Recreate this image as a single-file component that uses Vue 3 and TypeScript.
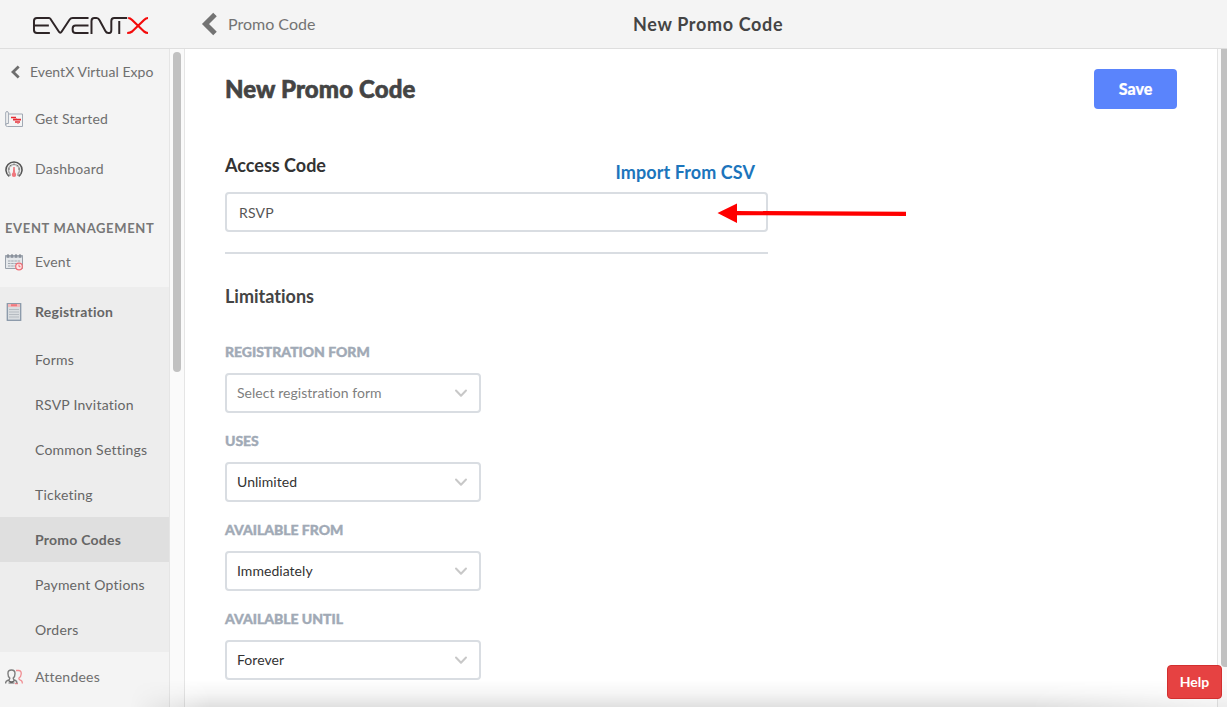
<script setup lang="ts">
interface NavItem {
  label: string
  icon: 'plan' | 'gauge'
  cls: string
}
interface Field {
  label: string
  value: string
  placeholder?: boolean
}

const topItems: NavItem[] = [
  { label: 'Get Started', icon: 'plan', cls: 'started' },
  { label: 'Dashboard', icon: 'gauge', cls: 'dashboard' },
]
const subItems: string[] = [
  'Forms',
  'RSVP Invitation',
  'Common Settings',
  'Ticketing',
  'Promo Codes',
  'Payment Options',
  'Orders',
]
const fields: Field[] = [
  { label: 'REGISTRATION FORM', value: 'Select registration form', placeholder: true },
  { label: 'USES', value: 'Unlimited' },
  { label: 'AVAILABLE FROM', value: 'Immediately' },
  { label: 'AVAILABLE UNTIL', value: 'Forever' },
]
</script>

<template>
  <div class="app">
    <header class="topbar">
      <div class="brand">
        <svg class="logo" width="117" height="20" viewBox="0 0 118 20" preserveAspectRatio="none" fill="none" stroke="#2e2527" stroke-width="2">
          <path d="M18 2H5Q2 2 2 5V14Q2 17 5 17H18M2 9.500H17" />
          <path d="M18 2L27 15.500Q28.500 18 30 15.500L38 3.500Q39 2 41 2H57" />
          <path d="M57 17H44Q41 17 41 14V12.500Q41 9.500 44 9.500H57" />
          <path d="M60 18V5Q60 2 63 2H65Q67 2 68 4L74 15Q75 17 77 17H78Q80 17 80 14V5Q80 2 83 2H96M88 5V18" />
          <path d="M97 2Q99 2 101 4L113 15.500Q115 17 117 17M117 2Q115 2 113 4L101 15.500Q99 17 96 17" stroke="#f40b0b" stroke-width="2.200" />
        </svg>
      </div>
      <a class="back">
        <svg width="17" height="24" viewBox="0 0 17 24"><path d="M14 2.500L4.500 12L14 21.500" fill="none" stroke="#737373" stroke-width="5" /></svg>
        <span>Promo Code</span>
      </a>
      <h1 class="page-name"><span>New Promo Code</span></h1>
    </header>

    <div class="body">
      <nav class="sidebar">
        <a class="expo">
          <svg width="10" height="14" viewBox="0 0 10 14"><path d="M8.700 1.400L3 7L8.700 12.600" fill="none" stroke="#6e6e6e" stroke-width="2.800" /></svg>
          <span>EventX Virtual Expo</span>
        </a>
        <a v-for="item in topItems" :key="item.label" class="nav-item" :class="item.cls">
          <svg v-if="item.icon === 'plan'" class="icon" viewBox="0 0 18 18" fill="none">
            <path d="M.7 15V3Q.7 1.500 2 1.500T3.400 3V13.500H2Q.7 13.500 .7 15Q.7 16.500 2.500 16.500H17.500V4H3.500" stroke="#a1a9b4" />
            <path d="M6 7.500H11M8 9.700H16M10 12H15" stroke="#e62c34" stroke-width="1.700" />
            <path d="M9 8.500H12M12 13.300H14" stroke="#ef8b8e" />
          </svg>
          <svg v-else class="icon" viewBox="0 0 18 18" fill="none">
            <path d="M4.300 16.400A8 8 0 1 1 13.700 16.400" stroke="#555" stroke-width="1.600" />
            <path d="M5.300 14A5.500 5.500 0 1 1 12.700 14" stroke="#aaa" stroke-width="1.500" />
            <path d="M3 9H5M13 9H15M5 5L6.200 6.200M13 5L11.800 6.200M9 3.500V5M2 15H6M12 15H16" stroke="#777" />
            <path d="M9 7L8.200 13.500H9.800Z" fill="#ef777d" stroke="#ef777d" />
            <circle cx="9" cy="14.800" r="2.200" fill="#ef777d" />
          </svg>
          <span>{{ item.label }}</span>
        </a>
        <h2 class="group"><span>EVENT MANAGEMENT</span></h2>
        <a class="nav-item">
          <svg class="icon" viewBox="0 0 18 18" fill="none">
            <path d="M.5 2.500H17.500V15.500H.5Z" fill="#e5e8eb" stroke="#98a0aa" />
            <path d="M.5 3.500H17.500" stroke="#a3abb5" stroke-width="2" />
            <path d="M3 1V5M7 1V5M11 1V5M15 1V5" stroke="#747b84" />
            <path d="M3 8H15.500M3 10.500H13M3 13H11" stroke="#a0a7af" stroke-dasharray="2.500 .7" />
            <circle cx="14" cy="13.500" r="3.300" fill="#fde7e7" stroke="#ee6d75" stroke-width="1.200" />
            <path d="M14 11.500V13.700H15.500" stroke="#ee6d75" />
          </svg>
          <span>Event</span>
        </a>
        <div class="section">
          <a class="nav-item registration">
            <svg class="icon" viewBox="0 0 18 18" fill="none">
              <rect x="2.300" y=".7" width="13.400" height="16.600" fill="#d9dde0" stroke="#8998a8" stroke-width="1.300" />
              <path d="M3 2.500H15" stroke="#f2b8ba" stroke-width="3" />
              <path d="M6 2.200H12" stroke="#ef777d" stroke-width="2" />
              <path d="M4 6.500H14M4 9H14M4 11.500H14M4 14H14" stroke="#b5bbc1" />
            </svg>
            <span>Registration</span>
          </a>
          <a v-for="sub in subItems" :key="sub" class="sub" :class="{ active: sub === 'Promo Codes' }">
            <span>{{ sub }}</span>
          </a>
        </div>
        <a class="nav-item attendees">
          <svg class="icon" viewBox="0 0 18 18" fill="none">
            <path d="M11 2.500H13.500Q16.500 2.500 16.200 6Q16 9 14 10Q13.500 11.500 16 12.300Q17.500 13 17.300 15.500M10 15.500H13" stroke="#f08c91" stroke-width="1.300" />
            <path d="M3 5Q3 2 6.500 2T10 5.500Q10 9 8.200 10.200Q8.200 12 10.500 12.500Q12 13 12 15.500M3 5Q2.800 9 4.800 10.200Q4.800 12 2.500 12.500Q.6 13 .6 15.500" stroke="#7c7c7c" stroke-width="1.400" />
            <path d="M3.500 12.500Q6.500 15.500 9.500 12.500M3.500 15H9.500" stroke="#656565" stroke-width="1.200" />
          </svg>
          <span>Attendees</span>
        </a>
      </nav>
      <div class="track"><div class="thumb"></div></div>

      <main class="content">
        <div class="title-row">
          <h2 class="title"><span>New Promo Code</span></h2>
          <button class="save"><span>Save</span></button>
        </div>
        <section class="access">
          <div class="access-head">
            <h3><span>Access Code</span></h3>
            <a class="import"><span>Import From CSV</span></a>
          </div>
          <div class="input"><span>RSVP</span></div>
          <hr />
        </section>
        <h3 class="limits"><span>Limitations</span></h3>
        <div v-for="f in fields" :key="f.label" class="field">
          <label><span>{{ f.label }}</span></label>
          <div class="select" :class="{ placeholder: f.placeholder }">
            <span>{{ f.value }}</span>
            <svg width="14" height="10" viewBox="0 0 14 10"><path d="M2 2.500L7 7.700L12 2.500" fill="none" stroke="#c8c8c8" stroke-width="2" stroke-linecap="round" stroke-linejoin="round" /></svg>
          </div>
        </div>
      </main>
      <div class="page-track"><div class="page-thumb"></div></div>
    </div>

    <div class="bottom-shade"></div>
    <svg class="arrow" width="190" height="22" viewBox="0 0 190 22">
      <path d="M.5 11L20 1.500V9L189 9.800V14L20 13.200V21Z" fill="#f00" />
    </svg>
    <button class="help"><span>Help</span></button>
  </div>
</template>

<style>
body { margin: 0; overflow: hidden; }
</style>

<style scoped>
.app { position: relative; width: 1227px; height: 707px; overflow: hidden; background: #fff; color: #6f6f6f; font-family: Lato, "Liberation Sans", sans-serif; font-size: 14px; font-variant-ligatures: none; display: flex; flex-direction: column; }
.app * { box-sizing: border-box; }
h1, h2, h3 { margin: 0; }
span { white-space: nowrap; }
.topbar { height: 49px; flex: none; background: #f4f4f4; border-bottom: 1px solid #dedede; display: flex; align-items: center; }
.brand { width: 201px; padding-left: 32px; padding-top: 4px; }
.logo { display: block; }
.back { display: flex; align-items: center; gap: 10px; width: 432px; font-size: 16px; color: #737373; }
.back span { margin-top: -2px; }
.page-name { font-size: 18px; font-weight: 700; letter-spacing: .66px; color: #444; }
.body { display: flex; flex: 1; min-height: 0; }
.sidebar { width: 169px; background: #f4f4f4; flex: none; overflow: hidden; letter-spacing: .23px; }
.expo { height: 46px; display: flex; align-items: center; padding-left: 10px; gap: 10px; letter-spacing: .05px; }
.nav-item { height: 50px; display: flex; align-items: center; padding-left: 5px; gap: 12px; }
.expo span, .nav-item span { margin-top: -2px; }
.started { height: 48px; }
.dashboard { height: 52px; }
.icon { width: 18px; height: 18px; flex: none; }
.group { height: 42px; padding-top: 23px; padding-left: 5px; font-size: 13px; line-height: 20px; letter-spacing: .64px; color: #777; }
.section { background: #ededed; color: #666; height: 365px; }
.registration { font-weight: 700; letter-spacing: .25px; }
.sub { height: 45px; display: flex; align-items: center; padding-left: 35px; }
.active { background: #dfdfdf; font-weight: 700; }
.track { width: 16px; flex: none; background: #fafafa; border: solid #e5e5e5; border-width: 0 1px; padding: 3px 0 0 3px; }
.thumb { width: 8px; height: 320px; border-radius: 4px; background: #c1c1c1; }
.content { width: 1032px; flex: none; padding: 20px 40px 0; color: #444; overflow: hidden; }
.title-row { display: flex; justify-content: space-between; height: 40px; align-items: center; }
.title { font-size: 24px; font-weight: 900; letter-spacing: .12px; margin-top: -2px; -webkit-text-stroke: .6px #444; }
.save { width: 83px; height: 40px; border: 0; border-radius: 4px; background: #5a84fc; color: #fff; font: 900 16px Lato, sans-serif; padding: 0 0 2px; -webkit-text-stroke: .2px #fff; }
.access { width: 543px; padding-top: 43px; }
.access-head { height: 40px; display: flex; justify-content: space-between; padding-right: 13px; line-height: 26px; font-size: 18px; }
.access-head h3 { font-size: 18px; color: #333; }
.import { color: #1c75bc; font-weight: 700; padding-top: 7px; letter-spacing: .07px; }
.input { height: 40px; border: 2px solid #d9dde2; border-radius: 4px; padding: 1px 12px 0; display: flex; align-items: center; color: #555; letter-spacing: .2px; }
hr { border: 0; height: 2px; background: #d9dde2; margin: 20px 0 0; }
.limits { margin-top: 29px; height: 58px; line-height: 26px; font-size: 18px; }
.field { width: 256px; height: 89px; }
.field label { display: block; height: 32px; padding-top: 1px; line-height: 20px; font-size: 14px; font-weight: 900; letter-spacing: -.03px; color: #a1aab6; -webkit-text-stroke: .4px #a1aab6; }
.select { height: 40px; border: 2px solid #d9dde2; border-radius: 4px; display: flex; align-items: center; justify-content: space-between; padding: 0 11px 0 10px; color: #333; letter-spacing: .04px; }
.select span { margin-top: -2px; }
.placeholder { color: #808080; }
.page-track { width: 10px; border-left: 1px solid #e3e3e3; padding-left: 3px; background: #fafafa; }
.page-thumb { height: 618px; background: #c1c1c1; border-radius: 0 0 0 4px; }
.bottom-shade { position: absolute; left: 130px; right: 0; bottom: 0; height: 27px; background: linear-gradient(transparent, rgba(0,0,0,.04) 50%, rgba(0,0,0,.12)); mask-image: linear-gradient(90deg, transparent, #000 80px, #000 900px, rgba(0,0,0,.4)); }
.arrow { position: absolute; left: 717px; top: 202px; }
.help { position: absolute; left: 1167px; top: 665px; width: 55px; height: 34px; padding: 0 0 2px; border: 1px solid #d22f2f; border-radius: 4px; background: #e64242; color: #fff; font: 700 14px Lato, sans-serif; }
</style>
